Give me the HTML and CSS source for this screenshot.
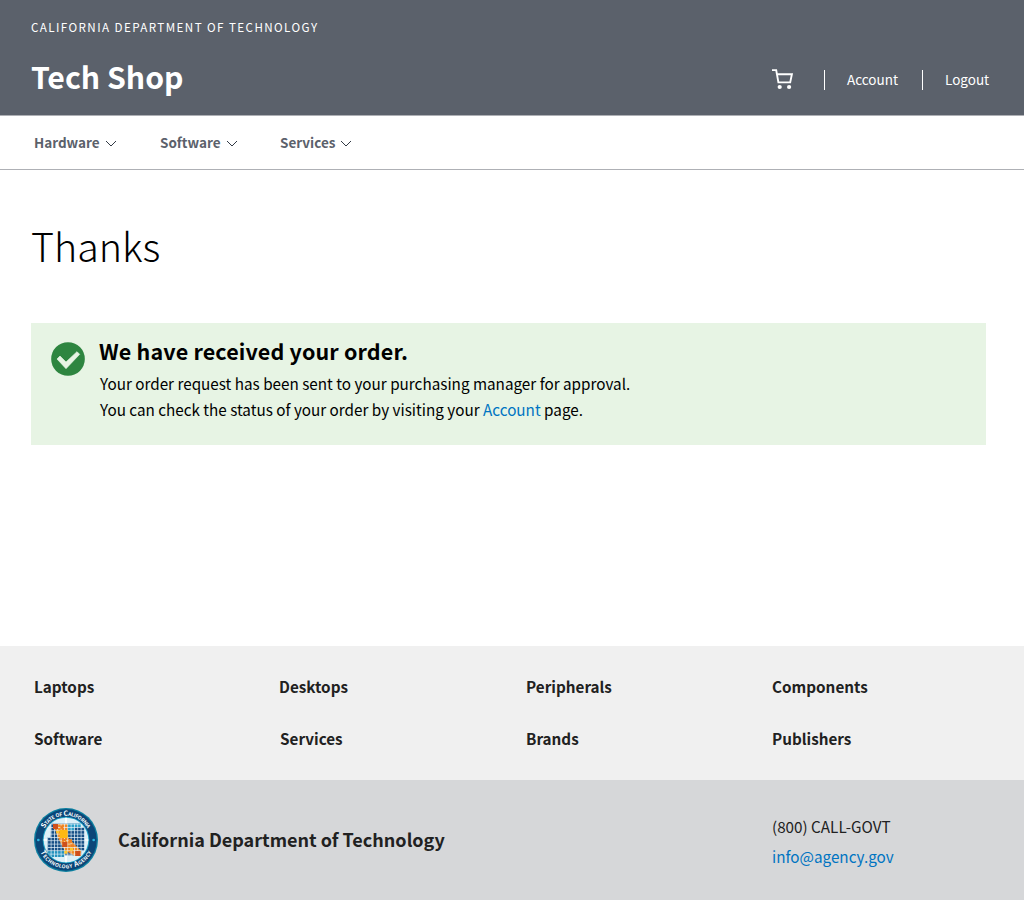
FILE: index.html
```
<!DOCTYPE html>
<html lang="en">
<head>
<meta charset="utf-8">
<title>Tech Shop - Thanks</title>
<link rel="stylesheet" href="styles.css">
</head>
<body>
<header class="site-header">
  <div class="agency">CALIFORNIA DEPARTMENT OF TECHNOLOGY</div>
  <div class="title-row">
    <div class="site-title">Tech Shop</div>
    <div class="user-links">
      <svg class="cart" viewBox="0 0 22 22" fill="none" stroke="#fff" stroke-width="1.9"><path d="M0 1.1H4.2L6.4 13.4H18.2L19.9 5.3H5"/><g fill="#fff" stroke="none"><circle cx="7.7" cy="18" r="2.1"/><circle cx="17.1" cy="18" r="2.1"/></g></svg>
      <a class="user-link account" href="#">Account</a>
      <a class="user-link logout" href="#">Logout</a>
    </div>
  </div>
</header>
<nav class="main-nav">
  <a class="nav-item nav-hardware" href="#">Hardware<svg class="chevron" viewBox="0 0 12 7"><path d="M1 1l5 5 5-5"/></svg></a>
  <a class="nav-item nav-software" href="#">Software<svg class="chevron" viewBox="0 0 12 7"><path d="M1 1l5 5 5-5"/></svg></a>
  <a class="nav-item" href="#">Services<svg class="chevron" viewBox="0 0 12 7"><path d="M1 1l5 5 5-5"/></svg></a>
</nav>
<main class="content">
  <h1 class="page-title">Thanks</h1>
  <section class="alert">
    <svg class="check" viewBox="93 81 102 102"><circle cx="144" cy="132" r="50.5" fill="#2e8540"/><path d="M111 132l9-9 18 18 33-31 8 8-41 43z" fill="#e7f4e4" stroke="#e7f4e4" stroke-width="2" stroke-linejoin="round"/></svg>
    <div class="alert-body">
      <h2 class="alert-title">We have received your order.</h2>
      <p class="alert-text">Your order request has been sent to your purchasing manager for approval.</p>
      <p class="alert-text">You can check the status of your order by visiting your <a class="link" href="#">Account</a> page.</p>
    </div>
  </section>
</main>
<footer>
  <div class="footer-links">
    <a href="#">Laptops</a><a class="nudge" href="#">Desktops</a><a href="#">Peripherals</a><a href="#">Components</a>
    <a href="#">Software</a><a href="#">Services</a><a href="#">Brands</a><a href="#">Publishers</a>
  </div>
  <div class="footer-base">
    <svg class="seal" viewBox="24 24 192 192">
      <defs>
        <pattern id="grid" width="10" height="10" patternUnits="userSpaceOnUse" patternTransform="translate(4 1)"><path d="M0 1H10M1 0V10" stroke="#e8f4fa" stroke-width="2.2"/></pattern>
        <path id="arc-top" d="M47 120a73 73 0 0 1 146 0"/>
        <path id="arc-bottom" d="M35 120a85 85 0 0 0 170 0"/>
        <clipPath id="disc"><circle cx="120" cy="120" r="66"/></clipPath>
      </defs>
      <circle cx="120" cy="120" r="96" fill="#0c7fa0"/>
      <circle cx="120" cy="120" r="92" fill="#0b4678"/>
      <circle cx="120" cy="120" r="70" fill="#1d9fc4"/>
      <circle cx="120" cy="120" r="67" fill="#dceff7"/>
      <path d="M120 53V187M53 120H187" stroke="#fff" stroke-width="5"/>
      <g clip-path="url(#disc)">
        <path d="M75 71H165V82H176V152H166V166H65V112H74z" fill="#174f86"/>
        <path d="M125 71H165V82H145V92H125z" fill="#2ba0c9"/>
        <path d="M65 152H115V171H65z" fill="#2592bd"/>
        <path d="M82 72H125V112L165 152V167H145L115 150L95 112z" fill="#f28a22"/>
        <path d="M65 71H180V171H65z" fill="url(#grid)"/>
      </g>
      <path d="M81 72H96V87H81zM148 153H163V168H148zM109 126H124V141H109z" fill="#cf4f1c"/>
      <path d="M101 90H125V114H101z" fill="#fdb913"/>
      <path d="M132 143h9v9h-9zM115 152h9v9h-9zM91 92h8v8h-8z" fill="#fdc82f"/>
      <path d="M103 77h9v9h-9zM108 117h12v7h-12zM128 118h10v10h-10zM133 133h13v8h-13z" fill="#ef7f22"/>
      <circle cx="37" cy="120" r="4" fill="#2bb6e0"/><circle cx="203" cy="120" r="4" fill="#2bb6e0"/>
      <text class="seal-text"><textPath href="#arc-top" startOffset="50%" text-anchor="middle" textLength="158">State of California</textPath></text>
      <text class="seal-text"><textPath href="#arc-bottom" startOffset="50%" text-anchor="middle" textLength="192">Technology Agency</textPath></text>
    </svg>
    <div class="footer-name">California Department of Technology</div>
    <div class="contact"><div>(800) CALL-GOVT</div><a class="link" href="#">info@agency.gov</a></div>
  </div>
</footer>
</body>
</html>
```
FILE: styles.css
```
* { box-sizing: border-box; }
body { margin: 0; height: 900px; display: flex; flex-direction: column; background: #fff; color: #000; font-family: "Noto Sans CJK SC", "Noto Sans", sans-serif; }
a { color: inherit; text-decoration: none; }
h1, h2, p { margin: 0; }
svg { display: block; flex: none; }
.site-header { height: 115px; padding: 17px 0 0 31px; background: #5b616b; color: #fff; }
.agency { font-size: 11.64px; line-height: 20px; letter-spacing: 1.41px; }
.title-row { display: flex; justify-content: space-between; padding-top: 18px; }
.site-title { padding-top: 1px; font-size: 30.2px; line-height: 40px; font-weight: 700; }
.user-links { display: flex; padding-top: 14px; }
.cart { width: 22px; height: 22px; margin-right: 30px; }
.user-link { height: 20px; margin-top: 1px; padding-left: 22px; border-left: 1px solid #fff; font-size: 13.5px; line-height: 18px; }
.account { width: 98px; }
.logout { width: 102px; }
.main-nav { display: flex; height: 55px; padding-left: 34px; border-top: 1px solid #aeb0b5; border-bottom: 1px solid #aeb0b5; color: #5b616b; font-size: 13.5px; line-height: 53px; font-weight: 700; }
.nav-item { display: flex; align-items: center; }
.nav-hardware { width: 126px; }
.nav-software { width: 120px; }
.chevron { width: 12px; height: 7px; margin: 2px 0 0 5px; fill: none; stroke: #323a45; }
.content { flex: 1; padding: 45px 38px 0 31px; }
.page-title { font-size: 39.4px; line-height: 60px; font-weight: 300; }
.alert { display: flex; height: 122px; margin-top: 48px; padding: 13px 20px 0; background: #e7f4e4; }
.check { width: 34px; height: 34px; margin: 6px 14px 0 0; }
.alert-title { font-size: 21.5px; line-height: 30px; font-weight: 700; letter-spacing: 0.16px; }
.alert-text { padding-left: 1px; font-size: 15.25px; line-height: 26px; }
.alert-title + .alert-text { padding-top: 4px; }
.link { color: #0074c2; }
.footer-links { display: grid; grid-template-columns: repeat(4, 246px); grid-auto-rows: 52px; height: 134px; padding: 14px 0 0 34px; background: #f0f0f0; color: #212121; font-size: 15.25px; line-height: 52px; font-weight: 700; }
.nudge { margin-left: -1px; }
.footer-base { display: flex; align-items: center; height: 120px; padding-left: 34px; background: #d6d7d9; color: #212121; }
.seal { width: 64px; height: 64px; }
.seal-text { fill: #fff; font-size: 21px; font-weight: 700; font-variant: small-caps; }
.footer-name { flex: none; width: 674px; padding: 0 0 2px 20px; font-size: 18px; font-weight: 700; }
.contact { padding-top: 1px; font-size: 15.25px; line-height: 30px; }
```
